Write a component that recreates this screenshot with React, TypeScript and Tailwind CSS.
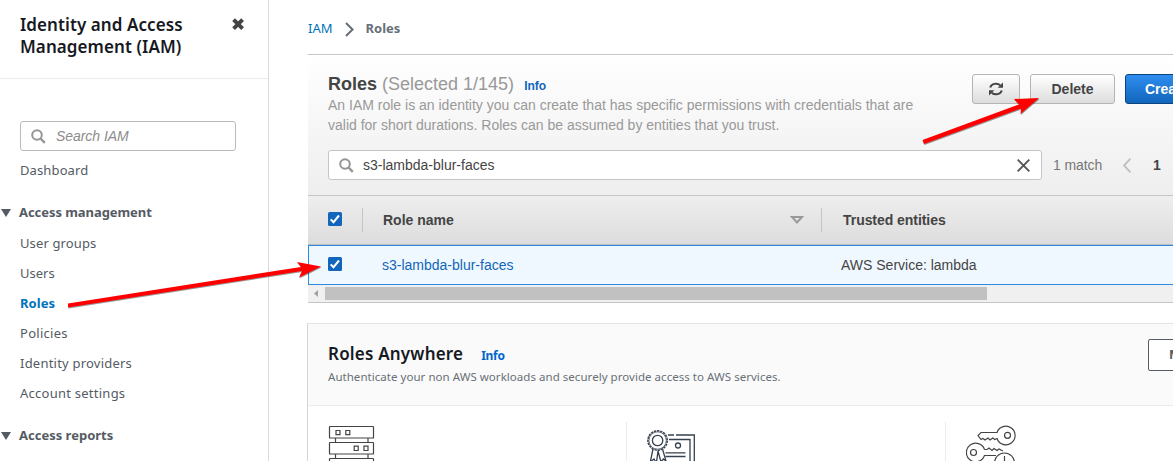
import React from "react";

const ember = "font-['Noto_Sans','Open_Sans',sans-serif]";
const arial = "font-['Liberation_Sans',Arial,sans-serif]";

function SearchIcon({ className }: { className: string }) {
  return (
    <svg className={className} viewBox="0 0 15 15" fill="none" stroke="#959595" strokeWidth="2">
      <circle cx="6" cy="6" r="4.8" />
      <path d="M9.5 9.5L13.8 13.8" strokeWidth="2.4" />
    </svg>
  );
}

function SideLink({ label, spacing, active }: { label: string; spacing: string; active?: boolean }) {
  return (
    <a className={`block h-[30px] pl-5 leading-[30px] ${spacing} ${active ? "font-bold text-[#0073bb]" : "text-[#545b64]"}`}>
      {label}
    </a>
  );
}

function SideHeading({ label, spacing }: { label: string; spacing: string }) {
  return (
    <div className="mt-[13px] flex h-[30px] items-center">
      <svg className="ml-px h-2 w-[10px]" viewBox="0 0 10 8">
        <path d="M0 0H10L5 8Z" fill="#545b64" />
      </svg>
      <span className={`ml-[8px] font-bold text-[#545b64] ${spacing}`}>{label}</span>
    </div>
  );
}

function Sidebar() {
  return (
    <aside className={`h-full w-[269px] shrink-0 overflow-hidden border-r border-[#d5dbdb] text-[13px] ${ember}`}>
      <div className="flex h-[79px] items-start justify-between border-b border-[#eaeded] pt-[14px] pr-[23px] pl-5">
        <h1 className="text-[17px] leading-[22px] font-semibold whitespace-nowrap text-[#16191f]">
          <span className="tracking-[0.08px]">Identity and Access</span>
          <br />
          <span className="tracking-[0.08px]">Management (IAM)</span>
        </h1>
        <svg className="mt-[4px] h-[13px] w-[13px]" viewBox="0 0 13 13">
          <path d="M1.600 1.600L10.600 10.600M10.600 1.600L1.600 10.600" stroke="#444" strokeWidth="3.9" />
        </svg>
      </div>
      <div className={`mt-[42px] ml-5 flex h-[30px] w-[216px] items-center rounded-[3px] border border-[#bbb] pl-[10px] ${arial}`}>
        <SearchIcon className="h-[15px] w-[15px]" />
        <span className="ml-[10px] text-[14px] tracking-[-0.05px] text-[#8c8c8c] italic">Search IAM</span>
      </div>
      <nav className="mt-1">
        <SideLink label="Dashboard" spacing="tracking-[0.12px]" />
        <SideHeading label="Access management" spacing="tracking-[-0.06px]" />
        <div>
          <SideLink label="User groups" spacing="tracking-[0.12px]" />
          <SideLink label="Users" spacing="tracking-normal" />
          <SideLink label="Roles" spacing="tracking-[0.05px]" active />
          <SideLink label="Policies" spacing="tracking-[0.27px]" />
          <SideLink label="Identity providers" spacing="tracking-[0.22px]" />
          <SideLink label="Account settings" spacing="tracking-[0.25px]" />
        </div>
        <SideHeading label="Access reports" spacing="tracking-normal" />
        <SideLink label="Access analyzer" spacing="tracking-[0.2px]" />
      </nav>
    </aside>
  );
}

function Checkbox() {
  return (
    <svg className="h-[14px] w-[14px] shrink-0" viewBox="0 0 14 14">
      <rect width="14" height="14" rx="1.5" fill="#1166bb" />
      <path d="M2.7 7.4L5.5 10.2L11 3.5" stroke="#fff" strokeWidth="2" fill="none" />
    </svg>
  );
}

function RolesPanel() {
  return (
    <section className={`ml-[39px] shrink-0 border-y border-[#c5c5c5] text-[14px] text-[#444] ${arial}`}>
      <div className="h-[141px] border-b border-[#c5c5c5] bg-linear-to-b from-white to-[#eee] pl-5">
        <div className="flex h-[95px]">
          <div className="w-[644px] shrink-0 pt-[19px] whitespace-nowrap">
            <div className="flex h-[21px] items-baseline leading-[21px]">
              <h2 className="text-[18px] font-bold">Roles</h2>
              <span className="ml-[5px] text-[18px] text-[#999]">(Selected 1/145)</span>
              <span className="ml-[10px] text-[12px] font-bold text-[#1166bb]">Info</span>
            </div>
            <p className="leading-5 text-[#999]">
              An IAM role is an identity you can create that has specific permissions with credentials that are
              <br />
              valid for short durations. Roles can be assumed by entities that you trust.
            </p>
          </div>
          <div className="mt-[19px] flex h-[30px] gap-[10px] font-bold">
            <button className="flex w-12 shrink-0 items-center justify-center rounded-[3px] border border-[#b4b4b4] bg-linear-to-b from-white to-[#ddd]">
              <svg className="h-[14px] w-[14px]" viewBox="0 0 14 14" fill="none" stroke="#444" strokeWidth="2">
                <path d="M1.2 5.5A5.9 5.1 0 0 1 11.2 3.3M12.8 8.5A5.9 5.1 0 0 1 2.8 10.7" />
                <path d="M14 .5V5.8H8.7ZM0 13.5V8.2H5.3Z" fill="#444" stroke="none" />
              </svg>
            </button>
            <button className="w-[85px] shrink-0 rounded-[3px] border border-[#b4b4b4] bg-linear-to-b from-white to-[#ddd]">Delete</button>
            <button className="w-[121px] shrink-0 rounded-[3px] border border-[#0a4580] bg-linear-to-b from-[#2e8df0] to-[#1166bb] pl-[19px] text-left text-white">Create role</button>
          </div>
        </div>
        <div className="flex h-[30px] items-center">
          <div className="flex h-[30px] w-[714px] shrink-0 items-center rounded-[3px] border border-[#c5c5c5] bg-white pr-[11px] pl-[10px]">
            <SearchIcon className="h-[15px] w-[15px]" />
            <span className="ml-[9px] flex-1">s3-lambda-blur-faces</span>
            <svg className="h-[13px] w-[13px]" viewBox="0 0 13 13">
              <path d="M.7 .7L12.3 12.3M12.3 .7L.7 12.3" stroke="#555" strokeWidth="1.9" />
            </svg>
          </div>
          <span className="ml-[11px] w-[49px] shrink-0 tracking-[-0.1px] whitespace-nowrap text-[#777]">1 match</span>
          <svg className="ml-[21px] h-[15px] w-2 shrink-0" viewBox="0 0 8 15">
            <path d="M7.5 .7L1 7.5L7.5 14.3" stroke="#c0c0c0" strokeWidth="1.9" fill="none" />
          </svg>
          <b className="ml-[22px]">1</b>
        </div>
      </div>
      <div className="flex h-[49px] items-center border-b border-[#bdbdbd] bg-linear-to-b from-[#eee] to-[#ddd] pl-5 font-bold whitespace-nowrap">
        <div className="mt-[-2px] flex"><Checkbox /></div>
        <div className="ml-5 flex h-6 w-[459px] shrink-0 items-center border-l border-[#c5c5c5] pl-5">
          <span className="flex-1">Role name</span>
          <svg className="mr-[17px] h-2 w-[14px]" viewBox="0 0 14 8">
            <path d="M2 1H12L7 6.5Z" fill="none" stroke="#999" strokeWidth="2" />
          </svg>
        </div>
        <div className="flex h-6 items-center border-l border-[#c5c5c5] pl-[21px] tracking-[-0.05px]">Trusted entities</div>
      </div>
      <div className="flex h-10 items-center border border-r-0 border-[#2e8ae0] bg-[#f0f8ff] pl-[19px]">
        <div className="mt-[-2px] flex"><Checkbox /></div>
        <a className="ml-10 w-[459px] shrink-0 text-[#1166bb]">s3-lambda-blur-faces</a>
        <span className="whitespace-nowrap">AWS Service: lambda</span>
      </div>
      <div className="flex h-[17px] items-center bg-[#f0f0f0]">
        <svg className="ml-[6px] h-[7px] w-1" viewBox="0 0 4 7">
          <path d="M4 0V7L0 3.5Z" fill="#a0a0a0" />
        </svg>
        <div className="ml-[7px] h-[13px] w-[662px] bg-[#c1c1c1]" />
      </div>
    </section>
  );
}

function ServerIcon() {
  return (
    <svg className="h-12 w-12" viewBox="0 0 48 48" fill="none" stroke="#444" strokeWidth="1.2">
      <rect x="2.5" y="1.5" width="44" height="11.5" rx=".6" />
      <rect x="2.5" y="17.5" width="44" height="11.5" rx=".6" />
      <rect x="2.5" y="33.5" width="44" height="11.5" rx=".6" />
      <path d="M8.5 13V17.5M41 13V17.5M8.5 29V33.5M41 29V33.5" />
      <path d="M9 5.5H13V9.7H9ZM18.8 5.5H22.8V9.7H18.8ZM27.2 21.2H31.2V25.5H27.2ZM37 21.2H41V25.5H37Z" />
    </svg>
  );
}

function CertificateIcon() {
  return (
    <svg className="h-12 w-12" viewBox="0 0 48 48" fill="none" stroke="#354150" strokeWidth="1.3">
      <path d="M21 5H27M29 5H47.3V44H20M22 9.5H43V40M18.5 22.8H38.5M18.5 26.5H38.5" />
      <circle cx="31" cy="15.5" r="2.5" />
      <circle cx="10.6" cy="10.5" r="9.7" strokeWidth="1.5" strokeDasharray="2.4 .8" />
      <circle cx="10.6" cy="10.5" r="8.7" strokeWidth=".8" />
      <circle cx="10.6" cy="10.5" r="5.2" />
      <path d="M6 19L3.3 32L7 29L9.4 33L11 21L14 32L16.4 29L19 31L15.5 19" />
    </svg>
  );
}

function KeysIcon() {
  return (
    <svg className="h-12 w-[50px]" viewBox="0 0 50 48" fill="none" stroke="#444" strokeWidth="1.2">
      <path d="M31 7.5A9.3 9.3 0 1 1 31 13.5L28.8 14.5L26.8 13L24 15L22 13L19 15L17 13.5L15 14.5L12 10.5L15 7.5Z" />
      <circle cx="41.5" cy="10.3" r="3" />
      <path d="M18.5 24.5A9.3 9.3 0 1 0 18.5 30.5H30M18.5 24.5H21L23 23L26 25.5L28 23.5L31 25.5L33 24L37 26" />
      <circle cx="7.5" cy="27.5" r="3" />
      <circle cx="38.5" cy="38" r="10" />
      <path d="M38.5 31V39H44" />
    </svg>
  );
}

function RolesAnywhere() {
  return (
    <section className={`mt-5 ml-[38px] h-[200px] shrink-0 border-t border-l border-[#e2e5e5] border-l-[#d0d5d5] ${ember}`}>
      <div className="flex h-[82px] border-b border-[#eaeded] bg-[#fafafa] pl-5 whitespace-nowrap">
        <div className="w-[820px] shrink-0 pt-[19px]">
          <div className="flex h-[24px] items-baseline leading-[22px]">
            <h2 className="text-[17px] font-semibold tracking-[0.2px] text-[#16191f]">Roles Anywhere</h2>
            <span className="ml-[18px] text-[12px] font-bold tracking-[-0.3px] text-[#0066cc]">Info</span>
          </div>
          <p className="text-[11.5px] leading-5 tracking-[0.04px] text-[#687078]">
            Authenticate your non AWS workloads and securely provide access to AWS services.
          </p>
        </div>
        <button className="mt-[15px] h-8 w-[90px] shrink-0 rounded-[2px] border border-[#545b64] bg-white pl-5 text-left text-[13px] font-bold text-[#545b64]">
          Manage
        </button>
      </div>
      <div className="flex pt-4">
        <div className="h-20 w-[318px] shrink-0 pt-[3px] pl-[19px]"><ServerIcon /></div>
        <div className="h-20 w-[319px] shrink-0 border-l border-[#eaeded] pt-[8px] pl-5"><CertificateIcon /></div>
        <div className="h-20 w-[319px] shrink-0 border-l border-[#eaeded] pt-[3px] pl-5"><KeysIcon /></div>
      </div>
    </section>
  );
}

export default function App() {
  return (
    <div className="relative flex h-[461px] w-[1173px] overflow-hidden bg-white">
      <Sidebar />
      <main className="flex h-full w-[904px] flex-col overflow-hidden">
        <div className={`flex h-[54px] shrink-0 items-center pt-[4px] pl-[39px] text-[13px] ${ember}`}>
          <a className="text-[#0073bb]">IAM</a>
          <svg className="ml-3 h-[15px] w-[9px]" viewBox="0 0 9 15">
            <path d="M1 1L7.5 7.5L1 14" stroke="#687078" strokeWidth="2.1" fill="none" />
          </svg>
          <b className="ml-3 text-[#687078]">Roles</b>
        </div>
        <RolesPanel />
        <RolesAnywhere />
      </main>
      <svg className="pointer-events-none absolute inset-0 h-[461px] w-[1173px]" viewBox="0 0 1173 461">
        <g fill="#000" opacity=".4" transform="translate(.5 1)">
          <path d="M68 303.5L301 267L297 262L321 266.5L299 277.5L302 271L68 307.5Z" />
          <path d="M922.5 140L1019 104.5L1014 99L1039 98L1020.5 114L1021 108.5L924 144Z" />
        </g>
        <path d="M68 303.5L301 267L297 262L321 266.5L299 277.5L302 271L68 307.5Z" fill="#f00" />
        <path d="M922.5 140L1019 104.5L1014 99L1039 98L1020.5 114L1021 108.5L924 144Z" fill="#f00" />
      </svg>
    </div>
  );
}
